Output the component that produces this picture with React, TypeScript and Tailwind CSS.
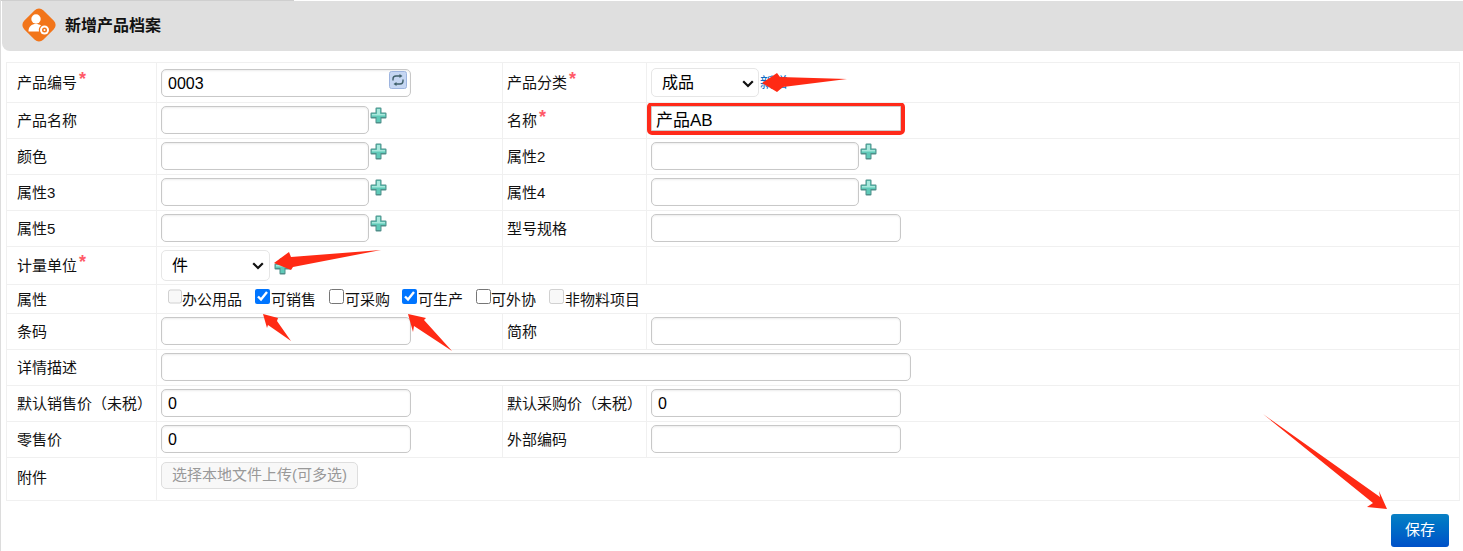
import React from 'react';

const inputCls =
  'h-[28px] rounded-[5px] border border-[#c8c8c8] bg-white px-[6px] pt-[3px] text-[16px] leading-none text-black shadow-[inset_0_1px_2px_rgba(0,0,0,0.08)] outline-none';

const PlusIcon = () => (
  <svg width="17" height="17" viewBox="0 0 17 17" className="ml-[1px] mt-[1px] shrink-0">
    <path d="M5.500 1.500a1 1 0 0 1 1-1h4a1 1 0 0 1 1 1v4h4a1 1 0 0 1 1 1v4a1 1 0 0 1-1 1h-4v4a1 1 0 0 1-1 1h-4a1 1 0 0 1-1-1v-4h-4a1 1 0 0 1-1-1v-4a1 1 0 0 1 1-1h4z" fill="#4f8f8a" />
    <path d="M6.500 1.500h4v5h5v3.500h-5v5h-4v-5h-5V6.500h5z" fill="#5fcab8" />
    <path d="M7 2h3v5h5v1.500H2V7h5z" fill="#a8e8dc" />
  </svg>
);

const RefreshIcon = () => (
  <svg width="18" height="18" viewBox="0 0 18 18" className="absolute right-[4px] top-[2px]">
    <rect x="0.500" y="0.500" width="17" height="17" rx="2" fill="#c5d6f2" stroke="#9db4df" />
    <path d="M4 9.500V8a3 3 0 0 1 3-3h4" fill="none" stroke="#3f5f6a" strokeWidth="1.400" />
    <path d="M10.500 3l3 2-3 2z" fill="#3f5f6a" />
    <path d="M14 8.500V10a3 3 0 0 1-3 3H7" fill="none" stroke="#3f5f6a" strokeWidth="1.400" />
    <path d="M7.500 11l-3 2 3 2z" fill="#3f5f6a" />
  </svg>
);

const Chevron = ({ pos }: { pos: string }) => (
  <svg width="12" height="8" viewBox="0 0 12 8" className={`pointer-events-none absolute ${pos}`}>
    <path d="M1.200 1.200L6 6l4.800-4.800" fill="none" stroke="#111" strokeWidth="2.200" />
  </svg>
);

const Req = () => (
  <span className="relative -top-[3px] ml-[2px] text-[18px] font-bold leading-none text-[#ff5a68]">*</span>
);

const Label = ({ text, req, cls = 'pl-[10px] pt-[2px]' }: { text: string; req?: boolean; cls?: string }) => (
  <td className={`border border-[#f0f0f0] align-middle text-[15px] text-[#111] ${cls}`}>
    {text}
    {req && <Req />}
  </td>
);

// 右侧列的标签
const RLabel = ({ text, req }: { text: string; req?: boolean }) => <Label text={text} req={req} cls="pl-[4px] pt-[2px]" />;

const Field = ({ value = '', plus, w = 'w-[208px]' }: { value?: string; plus?: boolean; w?: string }) => (
  <td className="border border-[#f0f0f0] pb-[2px] pl-[4px] align-middle">
    <div className="flex items-start">
      <input readOnly value={value} className={`${inputCls} ${w}`} />
      {plus && <PlusIcon />}
    </div>
  </td>
);

const Check = ({ text, checked, disabled, ml, box = 'w-[15px]', gap = 'ml-[1px]' }: { text: string; checked?: boolean; disabled?: boolean; ml: string; box?: string; gap?: string }) => (
  <label className={`flex items-center ${ml}`}>
    <input type="checkbox" readOnly checked={!!checked} disabled={disabled} className={`-mt-[6px] h-[15px] ${box}`} />
    <span className={`${gap} pt-[2px] text-[15px] text-[#111]`}>{text}</span>
  </label>
);

// 红色标注箭头
const arrows = [
  '847,79 783,87 777,92 762,83 777,73 780,77',
  '381,250 293,267 291,270 274,263 289,252 291,257',
  '291,341 268,325 267,328 263,314 278,318 277,321',
  '452,351 414,326 413,332 408,314 426,318 424,320',
  '1263,414 1380,497 1379,491 1387,509 1367,507 1373,503',
];

export default function App() {
  return (
    <div
      className="relative h-[551px] overflow-hidden border-l border-l-[#dcdcdc] bg-white"
      style={{ fontFamily: '"Liberation Sans", "Noto Sans CJK SC", sans-serif' }}
    >
      <div className="h-[1px] w-[293px] bg-[#cfcfcf]" />
      <div className="ml-[1px] flex h-[50px] items-center rounded-bl-[8px] bg-[#dfdfdf] pl-[19px]">
        <svg width="36" height="36" viewBox="0 0 36 36" className="-mt-[3px]">
          <rect x="4.500" y="4.500" width="27" height="27" rx="6" transform="rotate(45 18 18)" fill="#f2751a" />
          <circle cx="15" cy="12" r="4.700" fill="#fff" />
          <path d="M7.500 24.500c0-5 3-7.500 7.500-7.500 2 0 3.500.5 5 1.500-2 1.500-2.500 3.500-2 6z" fill="#fff" />
          <circle cx="23.500" cy="23" r="4.500" fill="#fff" />
          <circle cx="23.500" cy="23" r="2.500" fill="#f2751a" />
          <circle cx="23.500" cy="23" r="1" fill="#fff" />
        </svg>
        <span className="ml-[8px] text-[16px] font-bold text-[#111]">新增产品档案</span>
      </div>

      <div className="pl-[5px] pr-[3px] pt-[11px]">
        <table className="w-full table-fixed border-collapse">
          <colgroup>
            <col className="w-[150px]" />
            <col className="w-[346px]" />
            <col className="w-[144px]" />
            <col />
          </colgroup>
          <tbody>
            <tr className="h-[40px]">
              <Label text="产品编号" req />
              <td className="border border-[#f0f0f0] pl-[4px] align-middle">
                <div className="relative w-[250px]">
                  <input readOnly value="0003" className={`${inputCls} block w-[250px]`} />
                  <RefreshIcon />
                </div>
              </td>
              <RLabel text="产品分类" req />
              <td className="border border-[#f0f0f0] pl-[4px] align-middle">
                <div className="flex items-center">
                  <div className="relative">
                    <select className="block h-[29px] w-[108px] appearance-none rounded-[5px] border border-[#e6e6e6] bg-white pl-[10px] text-[16px] text-black">
                      <option>成品</option>
                    </select>
                    <Chevron pos="right-[5px] top-[12px]" />
                  </div>
                  <a className="ml-[1px] text-[14px] text-[#0a6cc4]">新增</a>
                </div>
              </td>
            </tr>
            <tr className="h-[36px]">
              <Label text="产品名称" />
              <Field plus />
              <RLabel text="名称" req />
              <td className="border border-[#f0f0f0] pl-[1px] align-top">
                <input
                  readOnly
                  value="产品AB"
                  className="-ml-[1px] -mt-[1px] block h-[33px] w-[258px] rounded-[5px] border-[4px] border-[#ff2a1a] bg-white px-[5px] text-[17px] text-black shadow-[inset_0_0_0_1px_#cccccc] outline-none"
                />
              </td>
            </tr>
            <tr className="h-[36px]">
              <Label text="颜色" />
              <Field plus />
              <RLabel text="属性2" />
              <Field plus />
            </tr>
            <tr className="h-[36px]">
              <Label text="属性3" />
              <Field plus />
              <RLabel text="属性4" />
              <Field plus />
            </tr>
            <tr className="h-[36px]">
              <Label text="属性5" />
              <Field plus />
              <RLabel text="型号规格" />
              <Field w="w-[250px]" />
            </tr>
            <tr className="h-[38px]">
              <Label text="计量单位" req />
              <td className="border border-[#f0f0f0] pl-[4px] align-middle">
                <div className="flex items-center">
                  <div className="relative">
                    <select className="block h-[31px] w-[109px] appearance-none rounded-[5px] border border-[#e6e6e6] bg-white pl-[10px] text-[16px] text-black">
                      <option>件</option>
                    </select>
                    <Chevron pos="right-[6px] top-[12px]" />
                  </div>
                  <div className="ml-[3px]">
                    <PlusIcon />
                  </div>
                </div>
              </td>
              <td className="border border-[#f0f0f0]" />
              <td className="border border-[#f0f0f0]" />
            </tr>
            <tr className="h-[29px]">
              <Label text="属性" />
              <td colSpan={3} className="border border-[#f0f0f0] align-middle">
                <div className="flex items-center">
                  <Check text="办公用品" disabled ml="ml-[11px]" box="w-[14px]" gap="ml-0" />
                  <Check text="可销售" checked ml="ml-[13px]" />
                  <Check text="可采购" ml="ml-[13px]" />
                  <Check text="可生产" checked ml="ml-[12px]" />
                  <Check text="可外协" ml="ml-[13px]" gap="ml-0" />
                  <Check text="非物料项目" disabled ml="ml-[13px]" />
                </div>
              </td>
            </tr>
            <tr className="h-[36px]">
              <Label text="条码" />
              <Field w="w-[250px]" />
              <RLabel text="简称" />
              <Field w="w-[250px]" />
            </tr>
            <tr className="h-[36px]">
              <Label text="详情描述" />
              <td colSpan={3} className="border border-[#f0f0f0] pb-[2px] pl-[4px] align-middle">
                <input readOnly className={`${inputCls} block w-[750px]`} />
              </td>
            </tr>
            <tr className="h-[36px]">
              <Label text="默认销售价（未税）" />
              <Field value="0" w="w-[250px]" />
              <RLabel text="默认采购价（未税）" />
              <Field value="0" w="w-[250px]" />
            </tr>
            <tr className="h-[36px]">
              <Label text="零售价" />
              <Field value="0" w="w-[250px]" />
              <RLabel text="外部编码" />
              <Field w="w-[250px]" />
            </tr>
            <tr className="h-[43px]">
              <Label text="附件" cls="pl-[10px] pb-[2px]" />
              <td colSpan={3} className="border border-[#f0f0f0] pl-[4px] align-top pt-[4px]">
                <button className="h-[27px] w-[197px] rounded-[5px] border border-[#dedede] bg-[#f8f8f8] text-[15px] text-[#999]">
                  选择本地文件上传(可多选)
                </button>
              </td>
            </tr>
          </tbody>
        </table>
        <div className="flex justify-end pr-[11px] pt-[13px]">
          <button className="h-[33px] w-[58px] rounded-[3px] bg-gradient-to-b from-[#0a80c4] to-[#0050c8] text-[15px] text-white">
            保存
          </button>
        </div>
      </div>

      <svg width="1463" height="551" className="pointer-events-none absolute -left-[1px] top-0">
        {arrows.map((p) => (
          <polygon key={p} points={p} fill="#ff2a14" />
        ))}
      </svg>
    </div>
  );
}
